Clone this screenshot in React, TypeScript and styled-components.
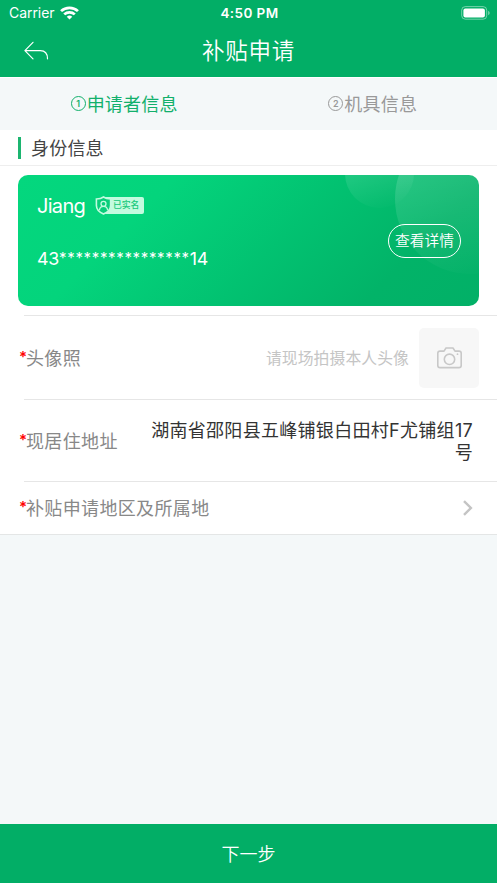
import React from "react";
import styled, { createGlobalStyle } from "styled-components";

const Global = createGlobalStyle`
  *, *::before, *::after { box-sizing: border-box; }
  body { margin: 0; background: #f4f8f9; }
`;

const Screen = styled.div`
  width: 497px;
  height: 883px;
  display: flex;
  flex-direction: column;
  background: #f4f8f9;
  font-family: Inter, "Noto Sans CJK SC", sans-serif;
  font-weight: 400;
  white-space: nowrap;
  overflow: hidden;
`;

const Header = styled.header`
  height: 77px;
  flex: none;
  background: #02ae66;
  color: #fff;
`;

const StatusBar = styled.div`
  height: 24px;
  padding: 1px 7px 0 9px;
  display: grid;
  grid-template-columns: 1fr auto 1fr;
  align-items: center;
  font-size: 14px;
  line-height: 24px;
`;

const Carrier = styled.div`
  display: flex;
  align-items: center;
  gap: 5px;
  letter-spacing: -0.05px;
`;

const Clock = styled.div`
  font-weight: 600;
  font-size: 13.5px;
  letter-spacing: 0.4px;
`;

const BatteryIcon = styled.svg`
  justify-self: end;
  display: block;
`;

const NavBar = styled.div`
  height: 53px;
  padding: 0 24px;
  display: grid;
  grid-template-columns: 1fr auto 1fr;
  align-items: center;
`;

const Title = styled.h1`
  margin: 0;
  padding-top: 1px;
  font-size: 22.5px;
  line-height: 50px;
  font-weight: 350;
  letter-spacing: 0.7px;
`;

const Tabs = styled.nav`
  height: 53px;
  flex: none;
  display: grid;
  grid-template-columns: 1fr 1fr;
  border-top: 1px solid #fff;
`;

const Tab = styled.div<{ $active?: boolean }>`
  display: flex;
  align-items: center;
  justify-content: center;
  padding-bottom: 2px;
  font-size: 18px;
  letter-spacing: 0.25px;
  color: ${(p) => (p.$active ? "#12b06c" : "#999")};
`;

const StepNumber = styled.span`
  width: 15px;
  height: 15px;
  margin-right: 1px;
  border: 1.3px solid currentColor;
  border-radius: 50%;
  display: flex;
  align-items: center;
  justify-content: center;
  font-size: 9px;
  line-height: 1;
  font-weight: 600;
  letter-spacing: 0;
`;

const SectionHead = styled.div`
  height: 36px;
  flex: none;
  padding-left: 18px;
  display: flex;
  align-items: center;
  gap: 10px;
  background: #fff;
  border-bottom: 1px solid #eee;
  color: #444;
  font-size: 18px;
  line-height: 26px;
  letter-spacing: 0.2px;
`;

const SectionTitle = styled.span`
  padding-top: 2px;
`;

const Accent = styled.span`
  width: 3px;
  height: 22px;
  background: #1cb570;
`;

const Panel = styled.main`
  background: #fff;
  flex: none;
  border-bottom: 1px solid #e4e6e6;
`;

const CardWrap = styled.div`
  padding: 9px 18px 9px;
`;

const Card = styled.section`
  position: relative;
  height: 131px;
  border-radius: 10px;
  overflow: hidden;
  padding: 0 18px 0 19px;
  display: flex;
  align-items: center;
  justify-content: space-between;
  color: #fff;
  background: linear-gradient(135deg, #04d77e 0%, #04d47c 27%, #02c271 55%, #02b368 80%, #02b067 100%);
`;

const Bubble = styled.span<{ $x: number; $y: number; $size: number }>`
  position: absolute;
  left: ${(p) => p.$x}px;
  top: ${(p) => p.$y}px;
  width: ${(p) => p.$size}px;
  height: ${(p) => p.$size}px;
  border-radius: 50%;
  background: linear-gradient(165deg, rgba(255, 255, 255, 0.14) 30%, rgba(255, 255, 255, 0) 95%);
`;

const Identity = styled.div`
  align-self: stretch;
  padding-top: 17px;
`;

const NameLine = styled.div`
  height: 28px;
  display: flex;
  align-items: center;
  gap: 10px;
  font-size: 20px;
  letter-spacing: -0.7px;
`;

const Badge = styled.span`
  display: flex;
  align-items: center;
  margin-top: -2px;
`;

const BadgeLabel = styled.span`
  height: 17px;
  width: 40px;
  margin-left: -8px;
  padding-left: 9px;
  border-radius: 2px;
  background: #c3fbdf;
  color: #14c879;
  font-size: 8.8px;
  line-height: 16px;
  font-weight: 500;
  letter-spacing: -0.1px;
`;

const Shield = styled.svg`
  position: relative;
  display: block;
`;

const IdNumber = styled.div`
  margin-top: 26px;
  font-size: 17.8px;
  line-height: 26px;
  letter-spacing: -0.2px;
  display: flex;
`;

const Mask = styled.span`
  font-size: 15px;
  line-height: 24px;
  letter-spacing: 0.65px;
`;

const DetailButton = styled.button`
  position: relative;
  width: 73px;
  height: 34px;
  padding: 0;
  border: 1.3px solid #fff;
  border-radius: 17px;
  background: transparent;
  color: #fff;
  font: inherit;
  font-size: 14.7px;
  line-height: 32px;
  font-weight: 350;
`;

const Row = styled.div<{ $height: number }>`
  height: ${(p) => p.$height}px;
  padding: 0 24px 0 19px;
  display: flex;
  align-items: center;
  justify-content: space-between;
`;

const Divider = styled.div`
  height: 1px;
  margin-left: 24px;
  background: #e6e6e6;
`;

const Label = styled.label`
  padding-bottom: 2px;
  color: #888;
  font-size: 18px;
  letter-spacing: 0.35px;
  display: flex;
  align-items: center;
`;

const Required = styled.span`
  width: 7px;
  color: #f00;
  font-size: 15px;
  font-weight: 600;
  line-height: 20px;
  letter-spacing: 0;
`;

const PhotoPicker = styled.div`
  display: flex;
  align-items: center;
  gap: 10px;
  margin-right: -6px;
  color: #c5c5c5;
  font-size: 15.8px;
  letter-spacing: 0.1px;
`;

const CameraBox = styled.div`
  width: 60px;
  height: 60px;
  border-radius: 5px;
  background: #f7f7f7;
  display: flex;
  align-items: center;
  justify-content: center;
`;

const Address = styled.div`
  width: 326px;
  padding-top: 2px;
  color: #333;
  font-size: 18px;
  line-height: 22px;
  letter-spacing: 0.3px;
  text-align: right;
`;

const Footer = styled.button`
  margin-top: auto;
  height: 59px;
  flex: none;
  border: 0;
  padding: 0 0 2px;
  background: #02ae66;
  color: #fff;
  font: inherit;
  font-size: 18px;
  font-weight: 350;
`;

export default function App() {
  return (
    <Screen>
      <Global />
      <Header>
        <StatusBar>
          <Carrier>
            Carrier
            <svg width="19" height="14" viewBox="0 0 18 14" preserveAspectRatio="none" fill="none" stroke="#fff" strokeWidth="2.6">
              <path d="M1 5.1a11.5 11.5 0 0 1 16 0" />
              <path d="M4 8.4a7.2 7.2 0 0 1 10 0" />
              <path d="M6.4 10.8a3.7 3.7 0 0 1 5.2 0L9 13.4z" fill="#fff" stroke="none" />
            </svg>
          </Carrier>
          <Clock>4:50 PM</Clock>
          <BatteryIcon width="29" height="14" viewBox="0 0 29 14">
            <rect x=".7" y=".6" width="25" height="12.6" rx="3.6" fill="none" stroke="#fff" strokeOpacity=".45" />
            <rect x="2.4" y="2.4" width="21.5" height="9" rx="2" fill="#fff" />
            <path d="M27.2 4.8q1.5.7 1.5 2.2t-1.5 2.2z" fill="#fff" fillOpacity=".5" />
          </BatteryIcon>
        </StatusBar>
        <NavBar>
          <svg width="25" height="20" viewBox="0 0 25 20" fill="none" stroke="#fff" strokeWidth="1.2" strokeLinecap="round" strokeLinejoin="round">
            <path d="M9 1.3.9 9.6 9 17.8M1 9.6h15.3c4.7 0 7.2 2.7 7.2 8.2" />
          </svg>
          <Title>补贴申请</Title>
        </NavBar>
      </Header>

      <Tabs>
        <Tab $active><StepNumber>1</StepNumber>申请者信息</Tab>
        <Tab><StepNumber>2</StepNumber>机具信息</Tab>
      </Tabs>

      <SectionHead><Accent /><SectionTitle>身份信息</SectionTitle></SectionHead>

      <Panel>
        <CardWrap>
          <Card>
            <Bubble $x={327} $y={-36} $size={69} />
            <Bubble $x={377} $y={-51} $size={150} />
            <Identity>
              <NameLine>
                Jiang
                <Badge>
                  <Shield width="17" height="19" viewBox="0 0 17 19" fill="none" stroke="#c3fbdf" strokeWidth="1.6">
                    <path d="M8.5 1C6.6 2.4 4 3 1.4 3v6.4c0 3.9 2.7 6.6 7.1 8.5 4.4-1.9 7.1-4.6 7.1-8.5V3C13 3 10.4 2.4 8.5 1z" fill="#08ce7a" />
                    <circle cx="8.5" cy="7.8" r="2.5" strokeWidth="1.3" />
                    <path d="M4.4 14.2c.3-2.5 1.8-3.8 4.1-3.8s3.8 1.3 4.1 3.8" strokeWidth="1.3" />
                  </Shield>
                  <BadgeLabel>已实名</BadgeLabel>
                </Badge>
              </NameLine>
              <IdNumber>43<Mask>****************</Mask>14</IdNumber>
            </Identity>
            <DetailButton>查看详情</DetailButton>
          </Card>
        </CardWrap>
        <Divider />
        <Row $height={83}>
          <Label><Required>*</Required>头像照</Label>
          <PhotoPicker>
            请现场拍摄本人头像
            <CameraBox>
              <svg width="25" height="22" viewBox="0 0 25 22" fill="none" stroke="#c8c8c8" strokeWidth="1.6" strokeLinejoin="round">
                <path d="M3 4.1h4L9 1h7l2 3.1h4q2.2 0 2.2 2.2v12.1q0 2.2-2.2 2.2H3q-2.2 0-2.2-2.2V6.3Q.8 4.1 3 4.1z" />
                <circle cx="12.5" cy="12.3" r="5.2" />
                <circle cx="20.5" cy="7.2" r=".9" fill="#c8c8c8" stroke="none" />
              </svg>
            </CameraBox>
          </PhotoPicker>
        </Row>
        <Divider />
        <Row $height={81}>
          <Label><Required>*</Required>现居住地址</Label>
          <Address>湖南省邵阳县五峰铺银白田村F尤铺组17<br />号</Address>
        </Row>
        <Divider />
        <Row $height={52}>
          <Label><Required>*</Required>补贴申请地区及所属地</Label>
          <svg width="11" height="16" viewBox="0 0 11 16" fill="none" stroke="#c4c4c4" strokeWidth="2.4">
            <path d="M2 1.2 8.9 8 2 14.8" />
          </svg>
        </Row>
      </Panel>

      <Footer>下一步</Footer>
    </Screen>
  );
}
